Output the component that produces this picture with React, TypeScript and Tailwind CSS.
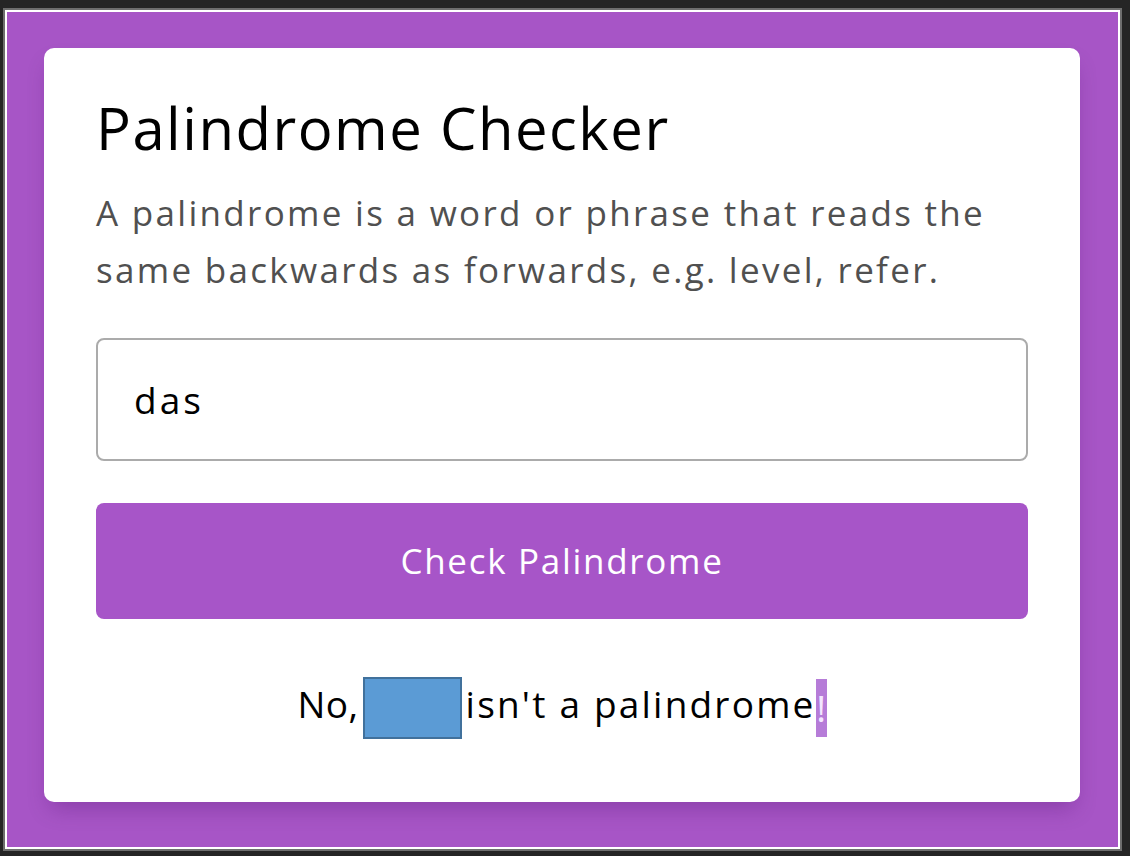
import { useState } from "react";

const App = () => {
  const [text, setText] = useState<string>("das");

  return (
    <div
      id="frame"
      className="w-[1130px] h-[856px] bg-[#252525] pt-[8px] pl-[3px] pr-[8px] pb-[5px]"
      style={{ fontFamily: '"Open Sans", "Liberation Sans", sans-serif' }}
    >
      <div className="h-full border-2 border-[#6e6e6e]">
        <div className="h-full border-2 border-white">
          <div
            id="page"
            className="h-full bg-[#a755c6] pt-[36px] pl-[37px] pr-[38px] pb-[45px]"
          >
            <div
              id="card"
              className="h-full bg-white rounded-[10px] pt-[52px] px-[52px] pb-[63px] flex flex-col shadow-[0_12px_22px_-6px_rgba(70,10,100,0.3)]"
            >
              <h1 className="text-[58px] leading-[56px] tracking-[1.5px] text-black font-normal">
                Palindrome Checker
              </h1>
              <p className="mt-[28px] text-[35px] leading-[57px] tracking-[2.3px] text-[#505050]">
                A palindrome is a word or phrase that reads the same backwards
                as forwards, e.g. level, refer.
              </p>

              <input
                type="text"
                value={text}
                onChange={(e) => setText(e.target.value)}
                className="mt-[40px] h-[123px] w-full border-2 border-[#ababab] rounded-[8px] pl-[36px] text-[37px] tracking-[3px] text-black outline-none"
              />

              <button
                type="button"
                className="mt-[42px] h-[116px] w-full rounded-[8px] bg-[#a755c8] text-white text-[35px] font-medium tracking-[1.7px]"
              >
                Check Palindrome
              </button>

              <div
                id="result"
                className="mt-[58px] h-[62px] flex items-center justify-center text-[37px] tracking-[2.2px] text-black"
              >
                <span className="mb-[8px] tracking-[0.5px]">No,</span>
                <span className="ml-[4px] mr-[4px] w-[99px] h-[62px] bg-[#5b9bd5] border-2 border-[#41719c]" />
                <span className="mb-[8px]">isn't a palindrome</span>
                <span className="w-[11px] h-[58px] bg-[#b67cd8] text-[#f3e6ff] flex items-center justify-center tracking-normal">
                  !
                </span>
              </div>
            </div>
          </div>
        </div>
      </div>
    </div>
  );
};

export default App;
